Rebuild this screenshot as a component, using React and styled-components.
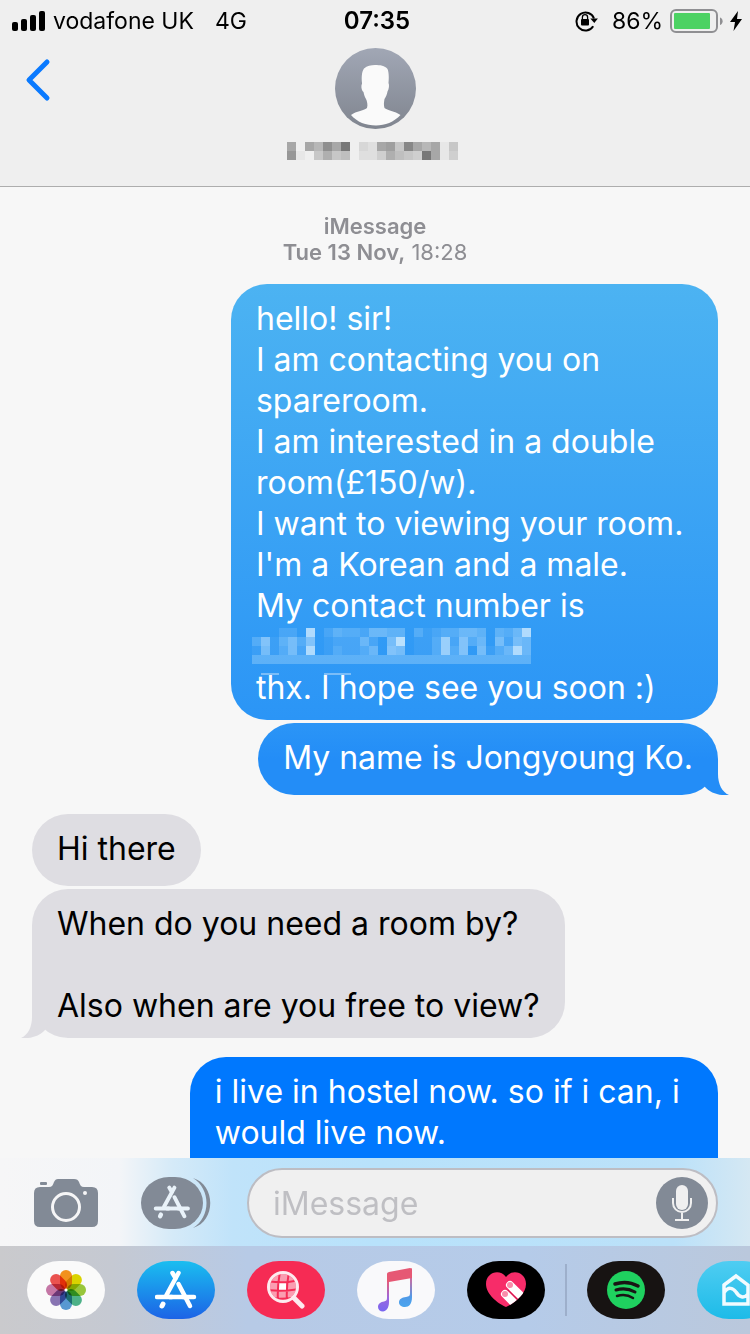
import React from 'react';
import styled, { createGlobalStyle, css } from 'styled-components';

const GlobalStyle = createGlobalStyle`
    * {
        box-sizing: border-box;
    }

    body {
        margin: 0;
        background: #f7f7f7;
        font-family: Inter, "Liberation Sans", sans-serif;
    }
`;

const Screen = styled.div`
    display: flex;
    flex-direction: column;
    height: 100vh;
    overflow: hidden;
    background: #f7f7f7;
    color: #000;
`;

const Header = styled.header`
    flex: none;
    background: #efefef;
    border-bottom: 1px solid #adadad;
`;

const StatusBar = styled.div`
    display: grid;
    grid-template-columns: 1fr auto 1fr;
    align-items: center;
    height: 40px;
    padding: 2px 8px 0 12px;
    font-size: 23px;
    line-height: 38px;
`;

const StatusGroup = styled.div`
    display: flex;
    align-items: center;
    justify-content: ${props => (props.$end ? 'flex-end' : 'flex-start')};
    gap: 7px;
`;

const Network = styled.span`
    margin-left: 14px;
`;

const Percent = styled.span`
    margin-left: 6px;
`;

const Time = styled.time`
    font-size: 24px;
    font-weight: 600;
`;

const NavBar = styled.div`
    display: grid;
    grid-template-columns: 1fr auto 1fr;
    align-items: start;
    padding: 8px 20px 26px;
`;

const IconButton = styled.button`
    display: flex;
    flex: none;
    align-items: center;
    justify-content: center;
    padding: 0;
    border: none;
    background: none;
    cursor: pointer;
`;

const BackButton = styled(IconButton)`
    width: 36px;
    height: 64px;
`;

const Contact = styled.div`
    display: flex;
    flex-direction: column;
    align-items: center;
    gap: 13px;
`;

const Thread = styled.main`
    flex: 1;
    min-height: 0;
    overflow: hidden;
    padding: 26px 32px 0;
`;

const Stamp = styled.p`
    margin: 0 0 19px;
    text-align: center;
    color: #8e8e93;
    font-size: 22px;
    line-height: 26px;

    strong {
        font-weight: 600;
    }
`;

const MessageGroup = styled.section`
    display: flex;
    flex-direction: column;
    align-items: ${props => (props.$sent ? 'flex-end' : 'flex-start')};
    gap: 3px;
    margin-bottom: 19px;
`;

const Bubble = styled.div`
    position: relative;
    display: flex;
    flex-direction: column;
    min-height: 72px;
    max-width: 80%;
    padding: 14px 25px 12px;
    border-radius: 36px;
    font-size: 32px;
    line-height: 41px;
    white-space: pre-line;
    background: #dedde2;
`;

const tones = {
   light: css`background: linear-gradient(#4cb3f2, #2b95f6);`,
   medium: css`background: linear-gradient(#2b95f6, #238df7 50%);`,
   deep: css`background: #0078fe;`,
};

//blue bubble, its tone depends on how far down the thread it sits
const SentBubble = styled(Bubble)`
    max-width: 71%;
    color: #fff;
    ${props => tones[props.$tone]}
`;

//newest bubble, it runs on below the composer
const LastBubble = styled(SentBubble)`
    min-height: 160px;
    max-width: 77%;
`;

const TailSvg = styled.svg`
    position: absolute;
    bottom: 0;
    ${props => (props.$left ? 'left: -11px; transform: scaleX(-1);' : 'right: -11px;')}
`;

const HiddenNumber = styled.svg`
    position: relative;
    display: block;
    flex: none;
    height: 41px;
    margin-left: -4px;
    overflow: visible;
`;

const Composer = styled.form`
    display: flex;
    flex: none;
    align-items: center;
    gap: 36px;
    height: 88px;
    padding: 2px 32px 0 34px;
    background: linear-gradient(90deg, #f6f6f7 0%, #f3f5f8 16%, #d5eaf8 23%, #c0e3fa 31%, #b8e2fb 50%, #bbe1f9 90%, #d5e8f3 100%);
`;

const CameraButton = styled(IconButton)`
    width: 71px;
    justify-content: flex-start;
`;

const Field = styled.div`
    display: flex;
    flex: 1;
    align-items: center;
    min-width: 0;
    height: 70px;
    padding: 0 8px 0 24px;
    border: 2px solid #bdbdc3;
    border-radius: 35px;
    background: #f0f0f0;
`;

const TextInput = styled.input`
    flex: 1;
    min-width: 0;
    padding: 0;
    border: none;
    outline: none;
    background: none;
    font-family: inherit;
    font-size: 32px;

    &::placeholder {
        color: #bfbfc3;
        opacity: 1;
    }
`;

const MicButton = styled(IconButton)`
    width: 52px;
    height: 52px;
    border-radius: 50%;
    background: #828a96;
`;

const Drawer = styled.nav`
    display: flex;
    flex: none;
    align-items: center;
    gap: 20px;
    height: 88px;
    padding-left: 27px;
    overflow: hidden;
    background: linear-gradient(90deg, #cacacd 0%, #c5c9d2 15%, #b7cae6 33%, #b5cbe9 70%, #bac8dc 100%);
`;

const AppGroup = styled.div`
    display: flex;
    flex: none;
    gap: 32px;
`;

const Divider = styled.div`
    flex: none;
    width: 2px;
    height: 52px;
    background: #9dafcb;
`;

const AppButton = styled(IconButton)`
    width: 78px;
    height: 58px;
    border-radius: 32px / 29px;
    background: ${props => props.$fill};
`;

const nameCells = ['9097c9f0329a5d97915', 'b10585602248654f914'];

const numberCells = [
   '000220b02433255440312335540435b',
   '3714637012225206c01139273506265',
   '161362b0132235076011393706135b5',
   '4444444444444444444444444444444',
];

//each hex digit is the strength of one 9px cell
const Cells = ({ rows, color }) => rows.map((row, y) =>
   [...row].map((level, x) => (
      <rect
         key={`${x}-${y}`}
         x={x * 9}
         y={y * 9}
         width="9"
         height="9"
         fill={color}
         fillOpacity={parseInt(level, 16) / 15}
      />
   ))
);

const SignalIcon = () => (
   <svg width="34" height="20" viewBox="0 0 34 20">
      <rect x="0" y="11" width="6" height="9" rx="2" />
      <rect x="9" y="8" width="6" height="12" rx="2" />
      <rect x="18" y="4" width="6" height="16" rx="2" />
      <rect x="27" y="0" width="6" height="20" rx="2" />
   </svg>
);

const LockIcon = () => (
   <svg width="24" height="22" viewBox="0 0 24 22">
      <path d="M18.2 16.2A9 9 0 1 1 19 8.5" fill="none" stroke="#000" strokeWidth="2" />
      <path d="M15.3 8.5h7.6l-3.6 4.4z" />
      <rect x="6" y="9" width="8" height="6.5" rx="1" />
      <path d="M7.4 9.5V7.3a2.6 2.6 0 0 1 5.2 0v2.2" fill="none" stroke="#000" strokeWidth="1.3" />
   </svg>
);

const BatteryIcon = () => (
   <svg width="53" height="24" viewBox="0 0 53 24">
      <rect x="1" y="1" width="46" height="22" rx="5" fill="none" stroke="#8f8f92" strokeWidth="2" />
      <rect x="4" y="4" width="36" height="16" rx="1" fill="#4cd263" />
      <path d="M50 8.5C53.5 9.5 53.5 15 50 16z" fill="#8f8f92" />
   </svg>
);

const BoltIcon = () => (
   <svg width="12" height="20" viewBox="0 0 12 20">
      <path d="M8 0L0 11h5L3.5 20L12 8H7z" />
   </svg>
);

const Avatar = () => (
   <svg width="81" height="81" viewBox="0 0 81 81">
      <defs>
         <linearGradient id="avatar" x1="0" y1="0" x2="0" y2="1">
            <stop offset="0" stopColor="#a1a7b5" />
            <stop offset="1" stopColor="#80858f" />
         </linearGradient>
      </defs>
      <circle cx="40.5" cy="40.5" r="40.5" fill="url(#avatar)" />
      <path
         d="M16 67C21 63 30 62.5 32 60C33 57 32 53 31 51C29.5 49 29 46 28.5 44C27 43 26 40 26.5 37C27 36 27 36 27 35C26.5 30 26.5 24 29 20.5C32 17.5 36 17 40 17C45 17 50 17.5 52.5 21C54 24 54 31 53.5 35C54.5 37 54 41 52.5 43.5C52 46 51 49 49.5 51C49 54 48.5 57 49.5 60C52 62.5 60 63 65.5 67C59 74 50 77.5 41 77.5C31 77.5 22 74 16 67z"
         fill="#fafafa"
      />
   </svg>
);

const Tail = ({ left, color }) => (
   <TailSvg $left={left} width="36" height="36" viewBox="0 -6 36 36">
      <path d="M25 -6V9C25 19 29 27 36 30C27 31 17 28 12 22L4 8L20 -6z" fill={color} />
   </TailSvg>
);

const CameraIcon = () => (
   <svg width="64" height="48" viewBox="0 0 64 48">
      <rect x="6" y="3" width="7" height="3" rx="1" fill="#828a96" />
      <path
         d="M6 8H15C18 8 19 6 20 3C21 1 22 0 24 0H40C43 0 44 1 45 3C46 6 47 8 50 8H58Q64 8 64 14V42Q64 48 58 48H6Q0 48 0 42V14Q0 8 6 8z"
         fill="#828a96"
      />
      <circle cx="32" cy="28" r="13.5" fill="none" stroke="#f6f6f7" strokeWidth="3" />
      <circle cx="51" cy="14" r="2" fill="#f6f6f7" />
   </svg>
);

const StoreMark = ({ color }) => (
   <g fill="none" stroke={color} strokeWidth="4.5" strokeLinecap="round">
      <path d="M2 27H17M28 27H39" />
      <path d="M14 27H29" strokeLinecap="butt" />
      <path d="M17.5 3L20.5 8" />
      <path d="M23.5 3L11.5 25" />
      <path d="M23.5 14L35 36" />
      <path d="M8 34L7 36" strokeWidth="5" />
   </g>
);

const AppsIcon = () => (
   <svg width="70" height="52" viewBox="0 0 70 52">
      <rect width="62" height="52" rx="28" ry="26" fill="#828a96" />
      <path d="M52 1C75 8 75 44 52 51C70 40 70 12 52 1z" fill="#828a96" />
      <g transform="translate(13 8) scale(.87)">
         <StoreMark color="#e9f2f9" />
      </g>
   </svg>
);

const MicIcon = () => (
   <svg width="22" height="36" viewBox="0 0 22 36">
      <rect x="5" y="0" width="12" height="25" rx="6" fill="#f0f0f0" />
      <path d="M2 13V18A9 9 0 0 0 20 18V13M11 28V35M4 35H18" fill="none" stroke="#f0f0f0" strokeWidth="2" />
   </svg>
);

const petals = ['#f7941d', '#dfd800', '#9bca3c', '#4eb58b', '#5a9bd5', '#8b76b6', '#c878a8', '#ef5350'];

const PhotosIcon = () => (
   <svg width="42" height="42" viewBox="0 0 42 42">
      {petals.map((color, i) => (
         <rect
            key={color}
            x="15"
            y="1"
            width="12"
            height="19"
            rx="6"
            fill={color}
            style={{ mixBlendMode: 'multiply' }}
            transform={`rotate(${i * 45} 21 21)`}
         />
      ))}
      <circle cx="21" cy="21" r="1.5" fill="#fff" />
   </svg>
);

const StoreIcon = () => (
   <svg width="42" height="40" viewBox="0 0 42 40">
      <StoreMark color="#fff" />
   </svg>
);

const SearchIcon = () => (
   <svg width="38" height="40" viewBox="0 0 38 40">
      <defs>
         <clipPath id="globe">
            <circle cx="16" cy="17" r="13" />
         </clipPath>
      </defs>
      <g clipPath="url(#globe)">
         <rect width="32" height="34" fill="#fa9db1" />
         <rect x="12" y="13" width="7" height="7" fill="#fff" />
         <path
            d="M0 11Q16 14 32 10M0 20Q16 22 32 19M13 2Q10 17 11 32M22 2Q19 17 20 32M0 28Q16 30 32 27"
            fill="none"
            stroke="#f52c56"
            strokeWidth="2"
         />
      </g>
      <circle cx="16" cy="17" r="14.5" fill="none" stroke="#fdebef" strokeWidth="3" />
      <path d="M27 28L35 36" stroke="#fdebef" strokeWidth="5" strokeLinecap="round" />
   </svg>
);

const MusicIcon = () => (
   <svg width="36" height="44" viewBox="0 0 36 44">
      <defs>
         <linearGradient id="music" x1="0" y1="0" x2="0" y2="1">
            <stop offset="0" stopColor="#ee5a74" />
            <stop offset=".3" stopColor="#d95f8c" />
            <stop offset=".65" stopColor="#9a67df" />
            <stop offset="1" stopColor="#7866f0" />
         </linearGradient>
         <linearGradient id="musicRight" x1="0" y1="0" x2="0" y2="1">
            <stop offset="0" stopColor="#ee5a74" />
            <stop offset=".35" stopColor="#b873ad" />
            <stop offset=".75" stopColor="#4f9ae8" />
            <stop offset="1" stopColor="#4aa5ee" />
         </linearGradient>
      </defs>
      <path d="M11 5V34C11 40 8 43.5 5 43.5C2 43.5 0 41.5 0 39C0 35.5 3 34 6 33.5C8 33 9 32.5 9 30V6z" fill="url(#music)" />
      <path d="M34 0V29C34 36 31 39 27 39C23.5 39 21 37 21 34.5C21 31 24 29.5 28 29C31 28.5 32 28 32 25V2z" fill="url(#musicRight)" />
      <path d="M9 6Q9 4.5 11 4L32 0Q34 0 34 2V10L11 14H9z" fill="#e65874" />
   </svg>
);

const HeartIcon = () => (
   <svg width="42" height="36" viewBox="0 0 42 36">
      <defs>
         <clipPath id="heart">
            <path d="M21 35C12 31 1 22 1 12C1 1 14-4 21 5C28-4 41 1 41 12C41 22 30 31 21 35z" />
         </clipPath>
      </defs>
      <g clipPath="url(#heart)">
         <rect width="42" height="36" fill="#f72c69" />
         <g stroke="#fff" strokeWidth="8" strokeLinecap="round">
            <path d="M25 13L46 34" />
            <path d="M20 22L41 43" />
         </g>
         <circle cx="25" cy="13" r="3" fill="#fa8cab" />
         <circle cx="20" cy="22" r="3" fill="#fa8cab" />
         <path d="M23 18L38 33" stroke="#c91f50" strokeWidth="1" />
      </g>
   </svg>
);

const SpotifyIcon = () => (
   <svg width="38" height="38" viewBox="0 0 38 38">
      <circle cx="19" cy="19" r="19" fill="#1fd15f" />
      <g fill="none" stroke="#191414" strokeLinecap="round">
         <path d="M8 13Q20 9 31 15" strokeWidth="3.5" />
         <path d="M9 19Q19 16 28 21" strokeWidth="3" />
         <path d="M10 25Q19 22.5 26 27" strokeWidth="2.5" />
      </g>
   </svg>
);

const HouseIcon = () => (
   <svg width="28" height="34" viewBox="0 0 28 34">
      <path
         d="M2 12L14 3L26 12V31H2zM2 20C6 13 11 15 14 19C17 24 22 26 26 21"
         fill="none"
         stroke="#f2fbff"
         strokeWidth="3.5"
      />
   </svg>
);

const pinnedApps = [
   { name: 'Photos', fill: '#fafafa', Icon: PhotosIcon },
   { name: 'App Store', fill: 'linear-gradient(#1abef0, #1c63e6)', Icon: StoreIcon },
   { name: 'Images', fill: '#f62b54', Icon: SearchIcon },
   { name: 'Music', fill: '#f9f9fb', Icon: MusicIcon },
   { name: 'Digital Touch', fill: '#000', Icon: HeartIcon },
];

const otherApps = [
   { name: 'Spotify', fill: '#171312', Icon: SpotifyIcon },
   { name: 'Home', fill: 'linear-gradient(#4fcdf2, #1dbbe8)', Icon: HouseIcon },
];

const AppList = ({ apps }) => (
   <AppGroup>
      {apps.map(({ name, fill, Icon }) => (
         <AppButton key={name} type="button" aria-label={name} $fill={fill}>
            <Icon />
         </AppButton>
      ))}
   </AppGroup>
);

const App = () => {
   return (
      <Screen>
         <GlobalStyle />
         <Header>
            <StatusBar>
               <StatusGroup>
                  <SignalIcon />
                  <span>vodafone UK</span>
                  <Network>4G</Network>
               </StatusGroup>
               <Time>07:35</Time>
               <StatusGroup $end>
                  <LockIcon />
                  <Percent>86%</Percent>
                  <BatteryIcon />
                  <BoltIcon />
               </StatusGroup>
            </StatusBar>
            <NavBar>
               <BackButton type="button" aria-label="Back">
                  <svg width="26" height="44" viewBox="0 0 26 44">
                     <path d="M22 4L4 22L22 40" fill="none" stroke="#0a7aff" strokeWidth="5" strokeLinecap="round" strokeLinejoin="round" />
                  </svg>
               </BackButton>
               <Contact>
                  <Avatar />
                  <svg width="176" height="18" viewBox="0 0 176 18" shapeRendering="crispEdges">
                     <Cells rows={nameCells} color="#777" />
                  </svg>
               </Contact>
            </NavBar>
         </Header>

         <Thread>
            <Stamp>
               <strong>iMessage</strong>
               <br />
               <strong>Tue 13 Nov,</strong> 18:28
            </Stamp>
            <MessageGroup $sent>
               <SentBubble $tone="light">
                  <span>
                     {'hello! sir!\nI am contacting you on spareroom.\nI am interested in a double room(£150/w).\nI want to viewing your room.\nI\'m a Korean and a male.\nMy contact number is'}
                  </span>
                  <HiddenNumber width="279" viewBox="0 -2 279 41" shapeRendering="crispEdges">
                     <Cells rows={numberCells} color="#dff3ff" />
                     <rect x="9" y="45" width="18" height="2" fill="#7bbdf8" />
                     <rect x="72" y="45" width="27" height="2" fill="#7bbdf8" />
                  </HiddenNumber>
                  <span>thx. I hope see you soon :)</span>
               </SentBubble>
               <SentBubble $tone="medium">
                  My name is Jongyoung Ko.
                  <Tail color="#238df7" />
               </SentBubble>
            </MessageGroup>
            <MessageGroup>
               <Bubble>Hi there</Bubble>
               <Bubble>
                  {'When do you need a room by?\n\nAlso when are you free to view?'}
                  <Tail left color="#dedde2" />
               </Bubble>
            </MessageGroup>
            <MessageGroup $sent>
               <LastBubble $tone="deep">
                  i live in hostel now. so if i can, i would live now.
               </LastBubble>
            </MessageGroup>
         </Thread>

         <Composer onSubmit={e => e.preventDefault()}>
            <CameraButton type="button" aria-label="Camera">
               <CameraIcon />
            </CameraButton>
            <IconButton type="button" aria-label="Apps">
               <AppsIcon />
            </IconButton>
            <Field>
               <TextInput type="text" placeholder="iMessage" aria-label="iMessage" />
               <MicButton type="button" aria-label="Dictate">
                  <MicIcon />
               </MicButton>
            </Field>
         </Composer>
         <Drawer>
            <AppList apps={pinnedApps} />
            <Divider />
            <AppList apps={otherApps} />
         </Drawer>
      </Screen>
   );
}


export default App;
